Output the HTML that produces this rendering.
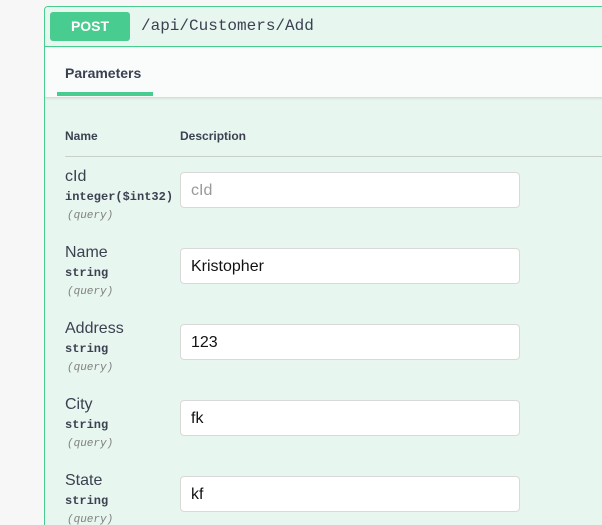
<!DOCTYPE html>
<html><head><style>
*{box-sizing:border-box;margin:0;padding:0}
html,body{width:602px;height:525px;overflow:hidden}
body{background:#f7f7f7;font-family:"Liberation Sans",sans-serif;position:relative}
.box{position:absolute;left:44px;top:6px;width:600px;height:519px;border:1px solid #49cc90;border-bottom:none;background:#e8f6f0;border-radius:4px 0 0 0;overflow:hidden}
.hdr{position:absolute;left:0;top:0;right:0;height:40px;border-bottom:1px solid #49cc90;background:#e8f6f0}
.badge{position:absolute;left:5px;top:5px;width:80px;height:29px;background:#49cc90;border-radius:3px;color:#fff;font-weight:bold;font-size:14px;text-align:center;line-height:29px}
.path{position:absolute;left:96px;top:10px;font-family:"Liberation Mono",monospace;font-size:16px;color:#3b4151}
.tabs{position:absolute;left:0;top:41px;right:0;height:50px;background:#fafcfb;border-bottom:1px solid #dcdcdc;box-shadow:0 1px 2px rgba(0,0,0,.08)}
.tab{position:absolute;left:20px;top:17px;font-weight:bold;font-size:14px;color:#3b4151}
.ul{position:absolute;left:12px;top:44px;width:96px;height:4px;background:#49cc90}
.th{position:absolute;top:122px;font-size:12px;font-weight:bold;color:#3b4151}
.line{position:absolute;left:20px;right:0;top:149px;height:1px;background:#c8cfcc}
.n{position:absolute;left:20px;font-size:16px;color:#3b4151}
.t{position:absolute;left:20px;font-family:"Liberation Mono",monospace;font-size:12px;font-weight:bold;color:#3b4151}
.q{position:absolute;left:22px;font-family:"Liberation Mono",monospace;font-size:11px;font-style:italic;color:#808080}
.in{position:absolute;left:135px;width:340px;height:36px;background:#fff;border:1px solid #d9d9d9;border-radius:4px;font-size:16px;color:#111;padding:9px 10px;line-height:18px}
</style></head><body>
<div class="box">
<div class="hdr"><div class="badge">POST</div><div class="path">/api/Customers/Add</div></div>
<div class="tabs"><div class="tab">Parameters</div><div class="ul"></div></div>
<div class="th" style="left:20px">Name</div><div class="th" style="left:135px">Description</div>
<div class="line"></div>

<div class="n" style="top:161px">cId</div><div class="t" style="top:183px">integer($int32)</div><div class="q" style="top:203px">(query)</div>
<div class="in" style="top:165px;color:#999">cId</div>

<div class="n" style="top:237px">Name</div><div class="t" style="top:259px">string</div><div class="q" style="top:279px">(query)</div>
<div class="in" style="top:241px">Kristopher</div>

<div class="n" style="top:313px">Address</div><div class="t" style="top:335px">string</div><div class="q" style="top:355px">(query)</div>
<div class="in" style="top:317px">123</div>

<div class="n" style="top:389px">City</div><div class="t" style="top:411px">string</div><div class="q" style="top:431px">(query)</div>
<div class="in" style="top:393px">fk</div>

<div class="n" style="top:465px">State</div><div class="t" style="top:487px">string</div><div class="q" style="top:507px">(query)</div>
<div class="in" style="top:469px">kf</div>
</div>
</body></html>
